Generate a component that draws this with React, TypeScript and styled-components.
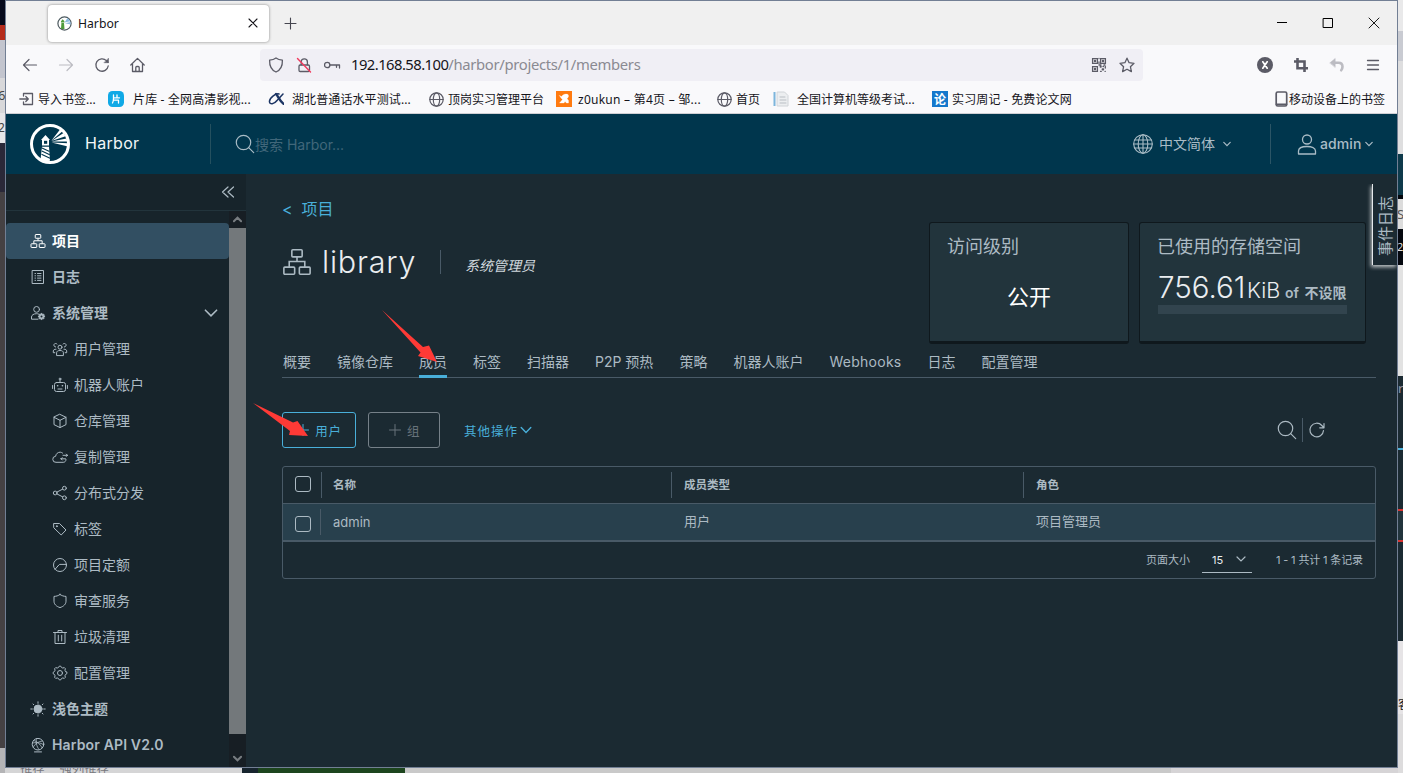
import React from 'react';
import styled, { createGlobalStyle } from 'styled-components';

const GlobalStyle = createGlobalStyle`
  * { box-sizing: border-box; }
  html, body { margin: 0; padding: 0; overflow: hidden; }
  body { font-family: Inter, "Noto Sans CJK SC", sans-serif; line-height: 1.2; background: #d4d4d4; }
  svg { display: block; flex: none; }
`;

const uiFont = '"Noto Sans", "Noto Sans CJK SC", sans-serif';

/* ---------- desktop behind the window ---------- */

const Desktop = styled.div`
  display: grid;
  grid-template-columns: 5px 1393px 5px;
  grid-template-rows: 768px 5px;
  width: 1403px;
  height: 773px;
  overflow: hidden;
`;

const SideStrip = styled.div`
  grid-row: 1 / 3;
  display: flex;
  flex-direction: column;
  overflow: hidden;
`;

const Slab = styled.div<{ $h: number; $c: string; $ink?: string; $size?: number; $shift?: number }>`
  flex: none;
  height: ${p => p.$h}px;
  background: ${p => p.$c};
  color: ${p => p.$ink ?? '#444'};
  font: ${p => p.$size ?? 13}px/${p => p.$h}px ${uiFont};
  text-indent: ${p => p.$shift ?? 0}px;
  overflow: hidden;
  white-space: nowrap;
`;

const BottomStrip = styled.div`
  grid-column: 2;
  display: flex;
  height: 5px;
  overflow: hidden;
  background: #c9c9c9;
`;

const BottomPiece = styled.div<{ $w: number; $c: string }>`
  flex: none;
  width: ${p => p.$w}px;
  background: ${p => p.$c};
  padding-left: 15px;
  font: 12.3px/16px ${uiFont};
  color: #77777d;
  display: flex;
  gap: 15px;
  white-space: nowrap;
  overflow: hidden;
  span { margin-top: -7px; }
`;

/* ---------- browser chrome ---------- */

const Window = styled.div`
  grid-column: 2;
  grid-row: 1;
  position: relative;
  display: flex;
  flex-direction: column;
  border: 1px solid #727f94;
  height: 768px;
`;

const TabStrip = styled.div`
  height: 44px;
  flex: none;
  background: #f0f0f0;
  display: flex;
  align-items: center;
  padding: 0 17px 0 42px;
`;

const BrowserTab = styled.div`
  width: 221px;
  height: 37px;
  display: flex;
  align-items: center;
  background: #fff;
  border-radius: 4px;
  box-shadow: 0 0 3px rgba(0, 0, 0, 0.45);
  padding: 0 11px 0 9px;
  font: 12.2px ${uiFont};
  color: #15141a;
  span { flex: 1; margin-left: 6px; }
`;

const PlusSlot = styled.div`
  margin-left: 15px;
  flex: 1;
`;

const WindowButtons = styled.div`
  display: flex;
  gap: 34px;
  align-items: center;
`;

const Toolbar = styled.div`
  height: 40px;
  flex: none;
  background: #f9f9fb;
  display: flex;
  align-items: center;
  padding-right: 16px;
  color: #5b5b66;
`;

const NavButtons = styled.div`
  width: 254px;
  display: flex;
  gap: 20px;
  padding-left: 16px;
`;

const UrlField = styled.div`
  width: 883px;
  height: 32px;
  border-radius: 4px;
  background: #f0eff5;
  display: flex;
  align-items: center;
  padding: 0 8px;
  gap: 12px;
`;

const Url = styled.div`
  flex: 1;
  margin: -2px 0 0 -2px;
  font: 14.8px ${uiFont};
  letter-spacing: -0.32px;
  color: #8a8a92;
  b { font-weight: 400; color: #15141a; letter-spacing: -0.55px; }
`;

const ToolIcons = styled.div`
  flex: 1;
  display: flex;
  justify-content: flex-end;
  align-items: center;
  gap: 20px;
`;

const Bookmarks = styled.div`
  height: 29px;
  flex: none;
  background: #f9f9fb;
  border-bottom: 1px solid #cfcfd4;
  display: flex;
  align-items: center;
  padding: 0 12px 0 13px;
  font: 12px ${uiFont};
  color: #15141a;
`;

const Bookmark = styled.div<{ $w?: number; $gap: number; $ls?: number }>`
  width: ${p => (p.$w ? p.$w + 'px' : 'auto')};
  margin-left: ${p => (p.$w ? '0' : 'auto')};
  flex: none;
  display: flex;
  align-items: center;
  gap: ${p => p.$gap}px;
  letter-spacing: ${p => p.$ls ?? 0}px;
  white-space: nowrap;
`;

const LunBadge = styled.div`
  width: 16px;
  height: 16px;
  background: #1578cc;
  color: #fff;
  font: 700 12px/15px "Noto Sans CJK SC", sans-serif;
  text-align: center;
`;

/* ---------- Harbor header ---------- */

const AppHeader = styled.header`
  height: 60px;
  flex: none;
  background: #00364d;
  display: flex;
  align-items: center;
  color: #a9bcc6;
  padding: 0 24px;
`;

const Brand = styled.div`
  width: 180px;
  display: flex;
  align-items: center;
  gap: 15px;
  font-size: 16px;
  color: #f2f6f8;
  letter-spacing: 0.3px;
`;

const VRule = styled.div<{ $h: number; $c: string }>`
  width: 1px;
  flex: none;
  height: ${p => p.$h}px;
  background: ${p => p.$c};
`;

const SearchBox = styled.div`
  flex: 1;
  display: flex;
  align-items: center;
  padding-left: 24px;
  font-size: 14px;
  color: #41677a;
  svg { color: #a9bcc6; }
  span { margin-top: 2px; }
`;

const HeaderMenu = styled.div<{ $gap: number; $ml?: number; $mr?: number }>`
  display: flex;
  align-items: center;
  gap: ${p => p.$gap}px;
  margin-left: ${p => p.$ml ?? 0}px;
  margin-right: ${p => p.$mr ?? 0}px;
  font-size: 14px;
`;

const MenuText = styled.span<{ $w: number; $bold?: boolean }>`
  width: ${p => p.$w}px;
  font-weight: ${p => (p.$bold ? 500 : 400)};
  letter-spacing: ${p => (p.$bold ? 0.1 : 0)}px;
  white-space: nowrap;
`;

/* ---------- sidebar ---------- */

const Body = styled.div`
  flex: 1;
  display: flex;
  min-height: 0;
`;

const Sidebar = styled.nav`
  width: 240px;
  flex: none;
  display: flex;
  flex-direction: column;
  background: #17242b;
`;

const Collapse = styled.div`
  height: 37px;
  flex: none;
  display: flex;
  align-items: center;
  justify-content: flex-end;
  padding: 0 11px 1px 0;
  border-bottom: 1px solid #22343c;
  color: #adbbc4;
`;

const SideScroll = styled.div`
  flex: 1;
  display: flex;
  min-height: 0;
`;

const NavList = styled.div`
  width: 223px;
  padding-top: 12px;
  overflow: hidden;
`;

const NavItem = styled.div<{ $sub?: boolean; $active?: boolean }>`
  height: 36px;
  display: flex;
  align-items: center;
  gap: 6px;
  padding: 0 11px 0 ${p => (p.$sub ? 46 : 24)}px;
  border-radius: 4px;
  font-size: 14px;
  font-weight: ${p => (p.$sub ? 400 : 600)};
  color: ${p => (p.$active ? '#fff' : '#adbbc4')};
  background: ${p => (p.$active ? '#324f62' : 'transparent')};
  white-space: nowrap;
`;

const NavLabel = styled.span<{ $latin?: boolean }>`
  flex: 1;
  letter-spacing: ${p => (p.$latin ? 0.15 : 0)}px;
`;

const Scrollbar = styled.div`
  width: 17px;
  display: flex;
  flex-direction: column;
  background: #171e24;
  color: #777c80;
`;

const ScrollButton = styled.div`
  height: 17px;
  display: flex;
  align-items: center;
  justify-content: center;
`;

const Thumb = styled.div`
  height: 506px;
  background: #73787b;
`;

const ScrollRest = styled.div`
  flex: 1;
`;

/* ---------- main area ---------- */

const Main = styled.main`
  flex: 1;
  background: #1b2a32;
  padding: 0 21px 0 36px;
  display: flex;
  flex-direction: column;
  color: #acbac3;
`;

const Heading = styled.div`
  height: 173px;
  flex: none;
  display: flex;
  justify-content: space-between;
  padding-right: 10px;
`;

const BackLink = styled.div`
  margin-top: 24px;
  height: 24px;
  display: flex;
  align-items: center;
  gap: 9px;
  font-size: 16px;
  color: #49afd9;
`;

const TitleRow = styled.div`
  margin-top: 19px;
  height: 42px;
  display: flex;
  align-items: center;
`;

const Title = styled.h1`
  margin: 0 0 0 10px;
  width: 118px;
  font-size: 30.5px;
  font-weight: 300;
  letter-spacing: 0.8px;
  color: #eaedf0;
`;

const RoleName = styled.div`
  margin: 8px 0 0 24px;
  font-size: 14px;
  font-style: italic;
  color: #d0d8dd;
`;

const Cards = styled.div`
  display: flex;
  gap: 10px;
  padding-top: 48px;
`;

const Card = styled.div<{ $w: number }>`
  width: ${p => p.$w}px;
  height: 122px;
  border: 1px solid #0f181d;
  border-bottom-width: 3px;
  border-radius: 3px;
  background: #22343c;
  padding: 10px 17px 0;
`;

const CardTitle = styled.div`
  font-size: 18px;
  line-height: 28px;
  color: #adbbc4;
`;

const AccessValue = styled.div`
  margin-top: 18px;
  text-align: center;
  font-size: 22px;
  line-height: 36px;
  color: #fff;
`;

const Quota = styled.div`
  height: 36px;
  margin-top: 8px;
  padding-left: 1px;
  display: flex;
  align-items: baseline;
  line-height: 36px;
  font-size: 22px;
  color: #eaedf0;
  white-space: nowrap;
`;

const QuotaNumber = styled.span`
  width: 89px;
  font-size: 29.5px;
  font-weight: 300;
`;

const QuotaUnit = styled.span`
  width: 38px;
  font-size: 21.5px;
  font-weight: 300;
`;

const QuotaTotal = styled.span`
  font-size: 14px;
  font-weight: 600;
  word-spacing: 2px;
  color: #adbbc4;
`;

const QuotaBar = styled.div`
  height: 9px;
  margin: 0 1px;
  background: #32444e;
`;

const Tabs = styled.div`
  height: 31px;
  flex: none;
  display: flex;
  gap: 26px;
  padding-left: 1px;
  border-bottom: 1px solid #495a67;
`;

const Tab = styled.div<{ $active?: boolean; $w?: number }>`
  height: 31px;
  width: ${p => (p.$w ? p.$w + 'px' : 'auto')};
  line-height: 30px;
  font-size: 14px;
  letter-spacing: ${p => (p.$w && p.$w > 60 ? 0.25 : 0)}px;
  white-space: nowrap;
  box-shadow: ${p => (p.$active ? 'inset 0 -3px 0 #49afd9' : 'none')};
`;

const Actions = styled.div`
  margin-top: 34px;
  height: 36px;
  flex: none;
  display: flex;
  align-items: center;
  padding-right: 50px;
`;

const OutlineButton = styled.button<{ $w: number; $disabled?: boolean }>`
  width: ${p => p.$w}px;
  height: 36px;
  margin-right: 12px;
  padding: 0 0 0 1px;
  display: flex;
  align-items: center;
  justify-content: center;
  gap: 6px;
  background: transparent;
  border: 1px solid ${p => (p.$disabled ? '#768189' : '#49afd9')};
  border-radius: 3px;
  color: ${p => (p.$disabled ? '#68737b' : '#49afd9')};
  font: 12.5px/1.2 Inter, "Noto Sans CJK SC", sans-serif;
  letter-spacing: 0.7px;
  span { margin-top: 2px; }
`;

const MoreActions = styled.div`
  flex: 1;
  margin-left: 12px;
  display: flex;
  align-items: center;
  gap: 2px;
  color: #49afd9;
  font-size: 12.5px;
  letter-spacing: 1px;
  span { margin-top: 2px; }
`;

const GridTools = styled.div`
  display: flex;
  align-items: center;
  gap: 5px;
`;

const Table = styled.div`
  margin-top: 18px;
  height: 113px;
  flex: none;
  border: 1px solid #495a67;
  border-radius: 3px;
`;

const TableRow = styled.div<{ $head?: boolean }>`
  display: flex;
  align-items: center;
  height: ${p => (p.$head ? 37 : 38)}px;
  border-bottom: ${p => (p.$head ? 1 : 2)}px solid #495a67;
  background: ${p => (p.$head ? 'transparent' : '#28404d')};
  font-size: ${p => (p.$head ? 11.5 : 13)}px;
  font-weight: ${p => (p.$head ? 600 : 400)};
`;

const CheckCell = styled.div<{ $w: number; $head?: boolean }>`
  width: ${p => p.$w}px;
  padding: ${p => (p.$head ? '0 0 2px 12px' : '3px 0 0 12px')};
`;

const Checkbox = styled.div`
  width: 16px;
  height: 16px;
  border: 1px solid #acbac3;
  border-radius: 3px;
`;

const Cell = styled.div<{ $w: number; $pad: number; $drop?: number }>`
  width: ${p => p.$w}px;
  padding: ${p => p.$drop ?? 0}px 0 0 ${p => p.$pad}px;
`;

const TableFoot = styled.div`
  height: 36px;
  display: flex;
  justify-content: flex-end;
  align-items: center;
  padding: 2px 12px 0 0;
  font-size: 11px;
`;

const PageSize = styled.div`
  width: 50px;
  height: 23px;
  margin: 0 24px 0 12px;
  border-bottom: 1px solid #adbbc4;
  display: flex;
  align-items: center;
  justify-content: space-between;
  padding: 1px 6px 0 10px;
  color: #eaedf0;
  svg { margin-top: -4px; color: #acbac3; }
`;

const PageInfo = styled.div`
  width: 87px;
  white-space: nowrap;
  letter-spacing: -0.15px;
`;

/* ---------- overlays ---------- */

const EventLog = styled.div`
  position: absolute;
  left: 1366px;
  top: 183px;
  width: 25px;
  height: 81px;
  display: flex;
  align-items: center;
  justify-content: center;
  background: #1b2a32;
  border-left: 1px solid #e6e9eb;
  box-shadow: -1px 2px 4px rgba(255, 255, 255, 0.75);
  clip-path: inset(0 0 -6px -6px);
  color: #acbac3;
  font-size: 15px;
  span { transform: translateX(1px) rotate(-90deg); white-space: nowrap; flex: none; margin-top: 2px; }
`;

const Pointer = styled.svg<{ $x: number; $y: number }>`
  position: absolute;
  left: ${p => p.$x}px;
  top: ${p => p.$y}px;
`;

/* ---------- icons ---------- */

type IconProps = { s?: number; w?: number; sw?: number; c?: string; children: React.ReactNode };

const Icon = ({ s = 16, w, sw = 1, c = 'currentColor', children }: IconProps) => (
  <svg width={w ?? s} height={s} viewBox={`0 0 ${w ?? s} ${s}`} fill="none" stroke={c} strokeWidth={sw}
    strokeLinecap="round" strokeLinejoin="round">{children}</svg>
);

const Chevron = ({ w = 10, up = false, sw = 1.2 }: { w?: number; up?: boolean; sw?: number }) => (
  <svg width={w} height={w} viewBox="0 0 10 10" fill="none" stroke="currentColor" strokeWidth={(sw * 10) / w} strokeLinecap="round">
    <path d={up ? 'M1 7l4-4 4 4' : 'M1 3l4 4 4-4'} />
  </svg>
);

const TreeIcon = ({ size = 16 }: { size?: number }) => (
  <svg width={size} height={size} viewBox="0 0 32 32" fill="none" stroke="currentColor" strokeWidth={size > 20 ? 1.7 : 2}>
    <rect x="10.5" y="3" width="11" height="7.5" rx="1" />
    <rect x="2" y="21.5" width="11.5" height="7.5" rx="1" />
    <rect x="18.5" y="21.5" width="11.5" height="7.5" rx="1" />
    <path d="M16 10.5v5M7.7 21.5v-6h16.6v6" />
  </svg>
);

const Magnifier = () => (
  <Icon s={20} sw={1.2}><circle cx="8.5" cy="8.5" r="7.2" /><path d="M13.7 13.7l5 5" /></Icon>
);

const GlobeSmall = () => (
  <Icon s={15} c="#5b5b66" sw={1.2}>
    <circle cx="7.5" cy="7.5" r="6.7" />
    <ellipse cx="7.5" cy="7.5" rx="3.2" ry="6.7" />
    <path d="M.8 7.5h13.4" />
  </Icon>
);

const Logo = () => (
  <svg width="40" height="40" viewBox="0 0 40 40">
    <circle cx="20" cy="20" r="18.5" fill="none" stroke="#fff" strokeWidth="3" />
    <path d="M11 16l4.5-5 4.5 5zM12 16h7v5.500h-7z" fill="#fff" />
    <path d="M14 16.800h3.200v3H14z" fill="#00364d" />
    <path d="M12 22.800h7l1 14-5 .7-4.500-2z" fill="#fff" />
    <path d="M12 24l7.500 3.500M11.800 27l8 3.700M11.500 30.200l8.500 4" stroke="#00364d" strokeWidth="1.1" />
    <path d="M21.500 16.500L30 5.500l2.500 1.800zM21.500 17L33.500 9l2 3.200zM21.500 17.600l15-3 .8 2.800zM21.500 18.400l16.500.8v3.400z" fill="#fff" />
  </svg>
);

const Favicon = () => (
  <svg width="15" height="15" viewBox="0 0 15 15">
    <circle cx="7.5" cy="7.5" r="6.6" fill="#fff" stroke="#4d5a60" strokeWidth="1.2" />
    <path d="M7.500 6.500L10.500 2l3 3.200zM8 7.200l5.600-1.200v2.500z" fill="#8dbbe0" />
    <path d="M4 5.200L5.700 3.300l1.700 1.900v1.200H4zM4.400 7h2.600l.5 6H4z" fill="#4c9a3c" />
  </svg>
);

const gear = (cx: number, cy: number, r: number) => {
  const pts: string[] = [];
  for (let i = 0; i < 32; i++) {
    const a = ((i - 0.5) * Math.PI) / 16;
    const rr = i % 4 < 2 ? r : r * 0.82;
    pts.push(`${(cx + rr * Math.cos(a)).toFixed(2)},${(cy + rr * Math.sin(a)).toFixed(2)}`);
  }
  return pts.join(' ');
};

const icons: Record<string, React.ReactNode> = {
  project: <TreeIcon />,
  log: (
    <Icon><rect x="2.5" y="1.5" width="11" height="13" /><path d="M5 4.5h.5M7.500 4.500H11M5 6.800h.5M7.500 6.800H11M5 9.100h.5M7.500 9.100H11M5 11.400h.5M7.500 11.400H11" /></Icon>
  ),
  admin: (
    <Icon><circle cx="6.6" cy="4.4" r="2.9" /><path d="M8 14.200H1.500V12c0-2 2.300-3.300 5-3.300.8 0 1.400.1 2 .3" />
      <polygon points={gear(11.5, 11.5, 3.1)} fill="currentColor" /><circle cx="11.5" cy="11.5" r="1" fill="#17242b" stroke="none" /></Icon>
  ),
  users: (
    <Icon><circle cx="8" cy="6.2" r="2" /><path d="M4.600 14.200v-2.500c0-1.400 1.400-2.200 3.400-2.200s3.400.8 3.400 2.200v2.500zM5 3a1.800 1.800 0 1 0-1.400 3M11 3a1.800 1.800 0 1 1 1.400 3M4 8.200c-1.600-.1-2.700.6-2.700 1.800v1.700h1.500M12 8.200c1.600-.1 2.700.6 2.700 1.800v1.700h-1.500" /></Icon>
  ),
  robot: (
    <Icon><rect x="2.5" y="5.5" width="11" height="9" rx="2" /><path d="M8 5.500V3M.6 8.500v3M15.400 8.500v3M6 12h4" /><circle cx="8" cy="2" r=".9" /><path d="M5.600 8.800h.1M10.400 8.800h.1" strokeWidth="1.6" /></Icon>
  ),
  box: <Icon><path d="M8 1.400l6 2.900v7.300l-6 3-6-3V4.300zM2 4.300l6 3 6-3M8 7.300v7.300" /></Icon>,
  cloud: (
    <Icon><path d="M14 10.500c0 1.800-1.200 2.800-2.800 2.800H4a3 3 0 0 1-.4-6C4 4.800 5.800 3.200 8 3.200c1 0 2 .3 2.700 1" /><path d="M9 9.800h4.500M9 9.800l1.200-1.200M9 9.800L10.200 11M11 6.300h4.500M15.500 6.300L14.300 5.100M15.500 6.300l-1.200 1.200" /></Icon>
  ),
  share: <Icon><circle cx="3.2" cy="8" r="1.9" /><circle cx="12.4" cy="3.2" r="1.9" /><circle cx="12.4" cy="12.8" r="1.9" /><path d="M4.900 7.100l5.800-3M4.900 8.900l5.800 3" /></Icon>,
  tag: <Icon><path d="M2 2.500h5.500l6.500 6.500-4.800 5-7.200-7z" /><circle cx="4.8" cy="5.2" r=".5" fill="currentColor" /></Icon>,
  quota: <Icon><circle cx="8" cy="8" r="6.5" /><path d="M3 12.400L6.800 8c.3-.4.700-.6 1.200-.6h6.300" /></Icon>,
  shield: <Icon><path d="M8 1.500c1.800 1.300 3.700 1.800 6 1.900v4.800c0 3-2.300 5.200-6 6.400-3.700-1.200-6-3.400-6-6.400V3.400c2.300-.1 4.200-.6 6-1.900z" /></Icon>,
  trash: <Icon><path d="M1.500 3.500h13M3 3.500v11h10v-11M6 3.500V1.500h4v2M6.300 6.200v5.800M9.700 6.200v5.800" /></Icon>,
  gear: <Icon><polygon points={gear(8, 8, 6.9)} /><circle cx="8" cy="8" r="2.5" /></Icon>,
  sun: (
    <Icon><circle cx="8" cy="8" r="4" fill="currentColor" /><path d="M8 .8v1.500M8 13.700v1.500M.8 8h1.500M13.700 8h1.500M3 3l.8.800M12.200 12.200l.8.800M3 13l.8-.8M12.200 3.800l.8-.8" /></Icon>
  ),
  api: (
    <Icon><circle cx="8" cy="7.2" r="5.8" /><path d="M4.500 14.900h7" /><path d="M3.600 3.500c3 .5 6.500 3.500 8.500 7.300M12.300 4c-3.500.3-7.500 2.600-9 6M6.500 1.600c-1 3 0 8 2.500 10.800M2.500 6c3-.8 8-.6 11 1.600" strokeWidth=".8" /></Icon>
  ),
};

const navItems: { icon: string; label: string; sub?: boolean; active?: boolean; open?: boolean; latin?: boolean }[] = [
  { icon: 'project', label: '项目', active: true },
  { icon: 'log', label: '日志' },
  { icon: 'admin', label: '系统管理', open: true },
  { icon: 'users', label: '用户管理', sub: true },
  { icon: 'robot', label: '机器人账户', sub: true },
  { icon: 'box', label: '仓库管理', sub: true },
  { icon: 'cloud', label: '复制管理', sub: true },
  { icon: 'share', label: '分布式分发', sub: true },
  { icon: 'tag', label: '标签', sub: true },
  { icon: 'quota', label: '项目定额', sub: true },
  { icon: 'shield', label: '审查服务', sub: true },
  { icon: 'trash', label: '垃圾清理', sub: true },
  { icon: 'gear', label: '配置管理', sub: true },
  { icon: 'sun', label: '浅色主题' },
  { icon: 'api', label: 'Harbor API V2.0', latin: true },
];

const tabs: { label: string; w?: number; active?: boolean }[] = [
  { label: '概要' }, { label: '镜像仓库' }, { label: '成员', active: true }, { label: '标签' },
  { label: '扫描器' }, { label: 'P2P 预热', w: 58.5 }, { label: '策略' }, { label: '机器人账户' },
  { label: 'Webhooks', w: 72 }, { label: '日志' }, { label: '配置管理' },
];

const BrowserChrome = () => (
  <>
    <TabStrip>
      <BrowserTab>
        <Favicon />
        <span>Harbor</span>
        <Icon s={10} c="#15141a" sw={1.1}><path d="M1 1l8 8M9 1l-8 8" /></Icon>
      </BrowserTab>
      <PlusSlot><Icon s={13} c="#45454f" sw={1.1}><path d="M6.500 1v11M1 6.500h11" /></Icon></PlusSlot>
      <WindowButtons>
        <Icon s={12} c="#000"><path d="M1 5.500h10" strokeLinecap="butt" /></Icon>
        <Icon s={12} c="#000"><path d="M1.500 1.500h9v9h-9z" /></Icon>
        <Icon s={12} c="#000" sw={0.9}><path d="M1 1l10 10M11 1L1 11" /></Icon>
      </WindowButtons>
    </TabStrip>
    <Toolbar>
      <NavButtons>
        <Icon sw={1.2}><path d="M14.500 8H1.500M7 2.500L1.500 8 7 13.500" /></Icon>
        <Icon sw={1.2} c="#bcbcc2"><path d="M1.500 8h13M9 2.500L14.500 8 9 13.500" /></Icon>
        <Icon sw={1.3}><path d="M14.200 9a6.200 6.200 0 1 1-1.800-5.400L14 5.200" /><path d="M14.500 1.500v4.200h-4.200z" fill="currentColor" strokeWidth=".5" /></Icon>
        <Icon sw={1.3}><path d="M.8 8L7.500 1.400 14.200 8M2.500 7v7.500h10V7M5.800 14.500v-4c0-.6.4-1 1-1h1.400c.6 0 1 .4 1 1v4" /></Icon>
      </NavButtons>
      <UrlField>
        <Icon sw={1.3}><path d="M8 1c2 1.500 4.200 2 6.400 2.200C14.600 9 12.600 13 8 15 3.400 13 1.400 9 1.600 3.200 3.800 3 6 2.500 8 1z" /></Icon>
        <Icon sw={1.3}><rect x="3" y="8" width="10.5" height="6.5" rx="1.2" /><path d="M5.200 7.800V5a3.100 3.100 0 0 1 6.200 0v2.800" /><path d="M1.500 1.500l13 13.500" stroke="#f23a5e" strokeWidth="1.4" /></Icon>
        <Icon w={17} s={16} sw={1.3}><circle cx="3.2" cy="8" r="2.7" /><path d="M5.900 8H15.500v3M12.500 8v2.300" /></Icon>
        <Url><b>192.168.58.100</b>/harbor/projects/1/members</Url>
        <Icon sw={1.3}>
          <path d="M1.600 1.600h4.800v4.800H1.600zM9.600 1.600h4.800v4.800H9.600zM1.600 9.600h4.800v4.800H1.600z" strokeLinejoin="miter" />
          <path d="M3.500 3.500h1v1h-1zM11.500 3.500h1v1h-1zM3.500 11.500h1v1h-1zM8 1.500v.1M8 5v1.500M9.300 9.300h.8v.8h-.8zM12 9.500h.5M14.300 9.500v1.500M11.300 12h1.200v.8h-1.200zM9.500 14.300h.8M14 14.300h.3M8 8h2M13 8h1" />
        </Icon>
        <Icon sw={1.3}><path d="M8 1.200l2.100 4.500 4.900.6-3.600 3.400 1 4.900L8 12.200l-4.400 2.400 1-4.900L1 6.300l4.900-.6z" /></Icon>
      </UrlField>
      <ToolIcons>
        <Icon><circle cx="8" cy="8" r="8" fill="currentColor" stroke="none" /><path d="M5.800 4.800l4.400 6.400M10.200 4.800l-4.400 6.400" stroke="#fff" strokeWidth="1.7" /></Icon>
        <Icon sw={2.6}><path d="M4.500 1v10.300H15M1 4.500h10.500V15" strokeLinecap="butt" strokeLinejoin="miter" /></Icon>
        <Icon c="#bcbcc2" sw={2.6}><path d="M5 5.800h4.500c2.800 0 4 1.700 4 4 0 1.300-.5 2.500-1.300 3.500" /><path d="M1 5.800L6.200 1.500v8.600z" fill="#bcbcc2" strokeWidth=".5" /></Icon>
        <Icon sw={1.3}><path d="M2.500 3.500h11M2.500 8h11M2.500 12.500h11" /></Icon>
      </ToolIcons>
    </Toolbar>
    <Bookmarks>
      <Bookmark $w={89} $gap={4}>
        <Icon w={15} s={16} c="#5b5b66" sw={1.3}><path d="M4.500 5V2.500h9v11h-9V11M.8 8h8.500M6.800 5.500L9.300 8l-2.500 2.500" /></Icon>导入书签...
      </Bookmark>
      <Bookmark $w={160} $gap={9} $ls={0.15}>
        <Icon c="#fff" sw={1.3}><rect width="16" height="16" rx="4.5" fill="#10a9e6" stroke="none" /><path d="M5.500 4v3.500c0 2-.3 3.300-1 4.500M5.500 6.800h6M9 4v2.800M5.500 9.200h5V12" /></Icon>片库 - 全网高清影视...
      </Bookmark>
      <Bookmark $w={161} $gap={8} $ls={0.1}>
        <Icon c="#1c3564" sw={2}><path d="M11 3C8 2 1 7 1.500 11c.3 2.500 4.500 2.500 7.500-1.500L15 3" strokeWidth="1.5" /><path d="M8 3c2 2 3.500 7 7.500 9.800" strokeWidth="2.4" /></Icon>湖北普通话水平测试...
      </Bookmark>
      <Bookmark $w={127} $gap={4}><GlobeSmall />顶岗实习管理平台</Bookmark>
      <Bookmark $w={161} $gap={6} $ls={0.25}>
        <Icon c="#fff"><rect width="16" height="16" fill="#ff7a0f" stroke="none" /><path d="M3.500 4.500l2 1C7 3.500 9 2.500 12 3.500c1 1.500.5 3-1 4l1.500 2v2.500h-2L9 10.500 8 12H3.500l3-3.500-1.500-1.500z" fill="#fff" strokeWidth=".3" /></Icon>z0ukun – 第4页 – 邹...
      </Bookmark>
      <Bookmark $w={56} $gap={4}><GlobeSmall />首页</Bookmark>
      <Bookmark $w={159} $gap={8}>
        <Icon c="#d0d4d8"><rect x=".5" y="1" width="2" height="14" fill="#7db5dc" stroke="none" /><path d="M4.500 1h7l3.500 3.500V15H4.500z" fill="#eceef0" /><path d="M7 6h5M7 9h6M7 12h6" stroke="#b9bec4" /></Icon>全国计算机等级考试...
      </Bookmark>
      <Bookmark $w={160} $gap={4} $ls={0.15}>
        <LunBadge>论</LunBadge>实习周记 - 免费论文网
      </Bookmark>
      <Bookmark $gap={1}>
        <Icon w={13} s={16} c="#5b5b66" sw={1.7}><rect x="1.2" y="1" width="10.5" height="14" rx="1.5" /><path d="M1.500 13.300h10" /></Icon>移动设备上的书签
      </Bookmark>
    </Bookmarks>
  </>
);

export default function App() {
  return (
    <>
      <GlobalStyle />
      <Desktop>
        <SideStrip>
          <Slab $h={25} $c="#060a1c" />
          <Slab $h={15} $c="#b52c1c" />
          <Slab $h={38} $c="#c3c5ce" />
          <Slab $h={35} $c="#d8d8da" $shift={-2}>6</Slab>
          <Slab $h={30} $c="#e6e6e8" $size={12} $shift={-2}>2</Slab>
          <Slab $h={49} $c="#2a2838" />
          <Slab $h={556} $c="#454143" />
          <Slab $h={25} $c="#b4b4b6" />
        </SideStrip>
        <Window>
          <BrowserChrome />
          <AppHeader>
            <Brand><Logo /><span>Harbor</span></Brand>
            <VRule $h={40} $c="#24505f" />
            <SearchBox><Magnifier /><span>搜索 Harbor...</span></SearchBox>
            <HeaderMenu $gap={6} $mr={39}>
              <Icon s={20} sw={1.1}><circle cx="10" cy="10" r="9.3" /><ellipse cx="10" cy="10" rx="4.8" ry="9.3" /><path d="M10 .7v18.600M1.700 6h16.600M.7 10h18.600M1.700 14h16.600" /></Icon>
              <MenuText $w={58}>中文简体</MenuText>
              <Chevron w={8} />
            </HeaderMenu>
            <VRule $h={40} $c="#2b5566" />
            <HeaderMenu $gap={3} $ml={26}>
              <Icon w={20} s={22} sw={1.3}><circle cx="10" cy="6.5" r="4.5" /><path d="M1.500 21v-3c0-3 3.800-4.500 8.500-4.500s8.500 1.500 8.500 4.500v3z" /></Icon>
              <MenuText $w={42} $bold>admin</MenuText>
              <Chevron w={8} />
            </HeaderMenu>
          </AppHeader>
          <Body>
            <Sidebar>
              <Collapse><Icon s={14} sw={1.2}><path d="M7 2L1.500 7 7 12M12.500 2L7 7l5.500 5" /></Icon></Collapse>
              <SideScroll>
                <NavList>
                  {navItems.map(n => (
                    <NavItem key={n.icon} $sub={n.sub} $active={n.active}>
                      {icons[n.icon]}
                      <NavLabel $latin={n.latin}>{n.label}</NavLabel>
                      {n.open && <Chevron w={14} sw={1.6} />}
                    </NavItem>
                  ))}
                </NavList>
                <Scrollbar>
                  <ScrollButton><Chevron w={9} up sw={2} /></ScrollButton>
                  <Thumb />
                  <ScrollRest />
                  <ScrollButton><Chevron w={9} sw={2} /></ScrollButton>
                </Scrollbar>
              </SideScroll>
            </Sidebar>
            <Main>
              <Heading>
                <div>
                  <BackLink><span>&lt;</span><span>项目</span></BackLink>
                  <TitleRow>
                    <TreeIcon size={30} />
                    <Title>library</Title>
                    <VRule $h={24} $c="#495a67" />
                    <RoleName>系统管理员</RoleName>
                  </TitleRow>
                </div>
                <Cards>
                  <Card $w={200}>
                    <CardTitle>访问级别</CardTitle>
                    <AccessValue>公开</AccessValue>
                  </Card>
                  <Card $w={227}>
                    <CardTitle>已使用的存储空间</CardTitle>
                    <Quota>
                      <QuotaNumber>756.61</QuotaNumber>
                      <QuotaUnit>KiB</QuotaUnit>
                      <QuotaTotal>of 不设限</QuotaTotal>
                    </Quota>
                    <QuotaBar />
                  </Card>
                </Cards>
              </Heading>
              <Tabs>
                {tabs.map(t => <Tab key={t.label} $active={t.active} $w={t.w}>{t.label}</Tab>)}
              </Tabs>
              <Actions>
                <OutlineButton $w={74}><Icon s={12}><path d="M6 .5v11M.5 6h11" /></Icon><span>用户</span></OutlineButton>
                <OutlineButton $w={72} $disabled><Icon s={12}><path d="M6 .5v11M.5 6h11" /></Icon><span>组</span></OutlineButton>
                <MoreActions><span>其他操作</span><Chevron w={12} sw={1.4} /></MoreActions>
                <GridTools>
                  <Magnifier />
                  <VRule $h={24} $c="#495a67" />
                  <Icon s={18} sw={1.2}><path d="M15.500 9.500a6.800 6.800 0 1 1-1.700-5l2 2.200M16 2.500v4.300h-4.300" /></Icon>
                </GridTools>
              </Actions>
              <Table>
                <TableRow $head>
                  <CheckCell $w={38} $head><Checkbox /></CheckCell>
                  <VRule $h={26} $c="#495a67" />
                  <Cell $w={349} $pad={11} $drop={2}>名称</Cell>
                  <VRule $h={26} $c="#495a67" />
                  <Cell $w={351} $pad={12} $drop={2}>成员类型</Cell>
                  <VRule $h={26} $c="#495a67" />
                  <Cell $w={350} $pad={12} $drop={2}>角色</Cell>
                </TableRow>
                <TableRow>
                  <CheckCell $w={37}><Checkbox /></CheckCell>
                  <VRule $h={26} $c="#495a67" />
                  <Cell $w={351} $pad={12} $drop={2}>admin</Cell>
                  <Cell $w={352} $pad={12}>用户</Cell>
                  <Cell $w={350} $pad={12}>项目管理员</Cell>
                </TableRow>
                <TableFoot>
                  页面大小
                  <PageSize>15<Chevron w={10} /></PageSize>
                  <PageInfo>1 - 1 共计 1 条记录</PageInfo>
                </TableFoot>
              </Table>
            </Main>
          </Body>
          <EventLog><span>事件日志</span></EventLog>
          <Pointer $x={375} $y={308} width="60" height="60" fill="#ff3a36">
            <polygon points="1,1 42,38 48,36.5 56,53 37,47 39.5,43.5" />
          </Pointer>
          <Pointer $x={246} $y={401} width="60" height="40" fill="#ff3a36">
            <polygon points="1,1 41,20.5 45.5,19 56,34 37,33 38,29" />
          </Pointer>
        </Window>
        <SideStrip>
          <Slab $h={31} $c="#e9e9ea" />
          <Slab $h={30} $c="#c9cbd2" />
          <Slab $h={93} $c="#dededf" />
          <Slab $h={41} $c="#0e3a4b" />
          <Slab $h={4} $c="#03060c" />
          <Slab $h={30} $c="#dcdcdc" $ink="#555" $shift={-1}>S</Slab>
          <Slab $h={36} $c="#05080f" $ink="#ddd" $size={11} $shift={-1}>2</Slab>
          <Slab $h={111} $c="#e2e2e2" />
          <Slab $h={25} $c="#1b2a32" $ink="#99a">r</Slab>
          <Slab $h={47} $c="#1b2a32" />
          <Slab $h={2} $c="#49afd9" />
          <Slab $h={59} $c="#1b2a32" />
          <Slab $h={2} $c="#d8322f" />
          <Slab $h={29} $c="#22343c" />
          <Slab $h={2} $c="#d8322f" />
          <Slab $h={99} $c="#1b2a32" />
          <Slab $h={55} $c="#e6e4e6" />
          <Slab $h={18} $c="#e6e4e6" $ink="#222" $size={12}>客</Slab>
          <Slab $h={59} $c="#dddcdd" />
        </SideStrip>
        <BottomStrip>
          <BottomPiece $w={237} $c="#d5d5d6"><span>推荐</span><span>强列推荐</span></BottomPiece>
          <BottomPiece $w={16} $c="#17242e" />
          <BottomPiece $w={147} $c="#1d451e" />
          <BottomPiece $w={766} $c="#c9c9c9" />
          <BottomPiece $w={227} $c="#d6d4d6" />
        </BottomStrip>
      </Desktop>
    </>
  );
}
